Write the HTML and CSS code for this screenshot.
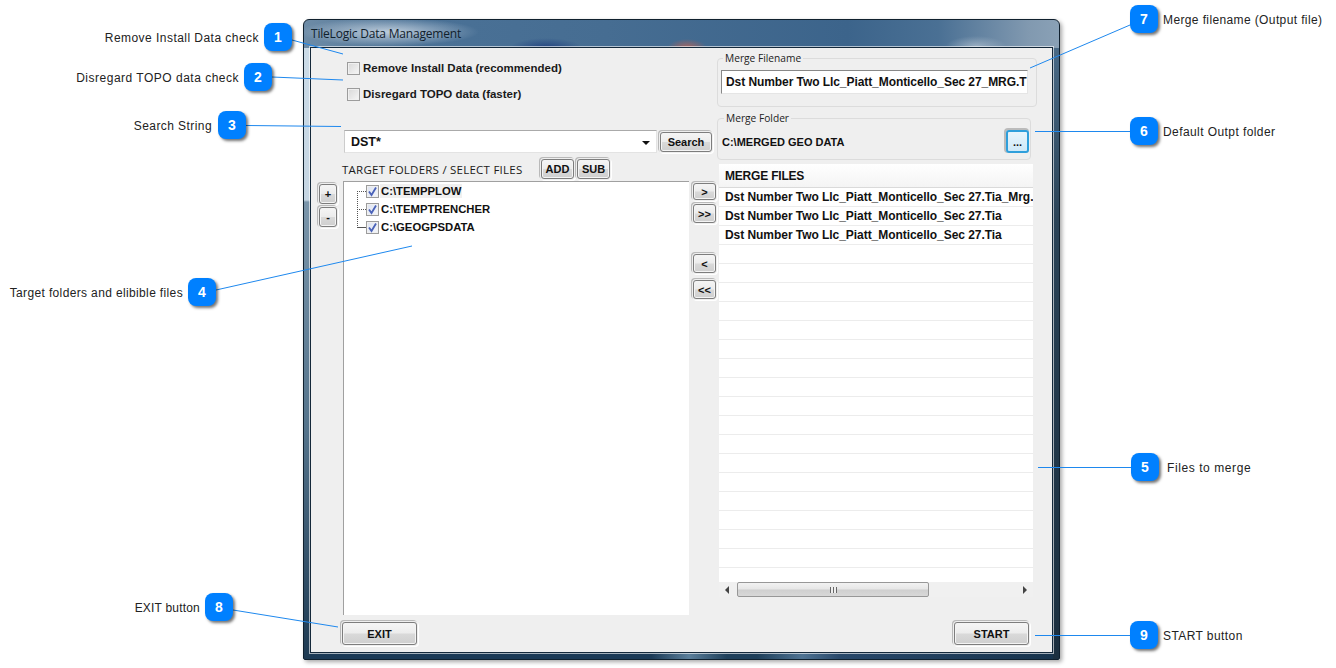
FILE: index.html
```html
<!DOCTYPE html>
<html lang="en">
<head>
<meta charset="utf-8">
<title>TileLogic Data Management</title>
<link rel="stylesheet" href="styles.css">
</head>
<body>
<div class="canvas">
  <section class="window">
    <div class="titlebar">TileLogic Data Management</div>
    <div class="client">
      <div class="col-left">
        <div class="checks">
          <label class="check"><span class="box"></span>Remove Install Data (recommended)</label>
          <label class="check"><span class="box"></span>Disregard TOPO data (faster)</label>
        </div>
        <div class="search-row">
          <div class="combo"><span>DST*</span><i class="caret"></i></div>
          <button class="btn btn-search">Search</button>
        </div>
        <div class="target-row">
          <span class="target-label">TARGET FOLDERS / SELECT FILES</span>
          <button class="btn btn-add">ADD</button>
          <button class="btn btn-add">SUB</button>
        </div>
        <div class="body-row">
          <div class="tools">
            <button class="btn btn-tool">+</button>
            <button class="btn btn-tool">-</button>
          </div>
          <div class="tree">
            <div class="tree-lines"></div>
            <div class="node selected"><span class="box checked"><svg viewBox="0 0 13 13" width="13" height="13"><path d="M3 6.5 L5.5 10 L10 2.5" fill="none" stroke="#4a62b8" stroke-width="1.8"/></svg></span><b>C:\TEMPPLOW</b></div>
            <div class="node"><span class="box checked"><svg viewBox="0 0 13 13" width="13" height="13"><path d="M3 6.5 L5.5 10 L10 2.5" fill="none" stroke="#4a62b8" stroke-width="1.8"/></svg></span><b>C:\TEMPTRENCHER</b></div>
            <div class="node"><span class="box checked"><svg viewBox="0 0 13 13" width="13" height="13"><path d="M3 6.5 L5.5 10 L10 2.5" fill="none" stroke="#4a62b8" stroke-width="1.8"/></svg></span><b>C:\GEOGPSDATA</b></div>
          </div>
          <div class="arrows">
            <button class="btn btn-arrow first">&gt;</button>
            <button class="btn btn-arrow second">&gt;&gt;</button>
            <button class="btn btn-arrow gap-a">&lt;</button>
            <button class="btn btn-arrow gap-b">&lt;&lt;</button>
          </div>
        </div>
        <div class="foot foot-left"><button class="btn btn-wide">EXIT</button></div>
      </div>
      <div class="col-right">
        <fieldset class="group group-file">
          <legend>Merge Filename</legend>
          <div class="file-input">Dst Number Two Llc_Piatt_Monticello_Sec 27_MRG.T</div>
        </fieldset>
        <fieldset class="group group-folder">
          <legend>Merge Folder</legend>
          <span class="folder-path">C:\MERGED GEO DATA</span>
          <button class="btn btn-browse">...</button>
        </fieldset>
        <div class="list">
          <div class="list-head">MERGE FILES</div>
          <div class="list-row">Dst Number Two Llc_Piatt_Monticello_Sec 27.Tia_Mrg.</div>
          <div class="list-row">Dst Number Two Llc_Piatt_Monticello_Sec 27.Tia</div>
          <div class="list-row">Dst Number Two Llc_Piatt_Monticello_Sec 27.Tia</div>
          <div class="list-row"></div><div class="list-row"></div><div class="list-row"></div><div class="list-row"></div>
          <div class="list-row"></div><div class="list-row"></div><div class="list-row"></div><div class="list-row"></div>
          <div class="list-row"></div><div class="list-row"></div><div class="list-row"></div><div class="list-row"></div>
          <div class="list-row"></div><div class="list-row"></div><div class="list-row"></div><div class="list-row"></div>
          <div class="list-row"></div><div class="list-row last"></div>
          <div class="hscroll">
            <i class="arrow-l"></i>
            <div class="thumb"><span class="grip"></span></div>
            <i class="arrow-r"></i>
          </div>
        </div>
        <div class="foot foot-right"><button class="btn btn-wide">START</button></div>
      </div>
    </div>
  </section>

  <svg class="leaders" width="1336" height="668" viewBox="0 0 1336 668">
    <g fill="none" stroke="#1e88ee" stroke-width="1">
      <path d="M292 40 L343 54"/>
      <path d="M272 77 L343 80"/>
      <path d="M246 125.5 L341 126.5"/>
      <path d="M216 290 L412 246"/>
      <path d="M1131 467.5 L1038 467.5"/>
      <path d="M1130 131.5 L1035 131.5"/>
      <path d="M1130 25 L1030 68"/>
      <path d="M233 610 L338 627"/>
      <path d="M1130 635.5 L1035 635.5"/>
    </g>
  </svg>

  <span class="badge b1">1</span><span class="note n1">Remove Install Data check</span>
  <span class="badge b2">2</span><span class="note n2">Disregard TOPO data check</span>
  <span class="badge b3">3</span><span class="note n3">Search String</span>
  <span class="badge b4">4</span><span class="note n4">Target folders and elibible files</span>
  <span class="badge b5">5</span><span class="note n5">Files to merge</span>
  <span class="badge b6">6</span><span class="note n6">Default Outpt folder</span>
  <span class="badge b7">7</span><span class="note n7">Merge filename (Output file)</span>
  <span class="badge b8">8</span><span class="note n8">EXIT button</span>
  <span class="badge b9">9</span><span class="note n9">START button</span>
</div>
</body>
</html>
```
FILE: styles.css
```css
* { box-sizing: border-box; }
html, body { margin: 0; padding: 0; background: #fff; }
body { font-family: "Liberation Sans", Arial, sans-serif; font-size: 12px; color: #111; overflow: hidden; }
.canvas { position: relative; width: 1336px; height: 668px; overflow: hidden; }

/* Window */
.window {
  position: absolute; left: 303px; top: 19px; width: 757px; height: 641px;
  border: 1px solid #10202e; border-radius: 6px 6px 2px 2px;
  box-shadow: 2px 2px 4px rgba(0,0,0,.35);
  padding: 0 6px 6px 6px;
  display: flex; flex-direction: column;
  background:
    linear-gradient(180deg, #cbdbe7 0, #c5d5e2 152px, #7a95aa 154px, #54738b 380px, #1e3a52 100%) left 0 top 28px / 6px calc(100% - 28px) no-repeat,
    linear-gradient(180deg, #4a6a86 0, #2b4458 170px, #22384a 400px, #1c3040 100%) right 0 top 28px / 6px calc(100% - 28px) no-repeat,
    linear-gradient(90deg, #1b3a56 0, #1b3a56 46%, #5b7f9b 51%, #1e3f5a 56%, #1e3f5a 60%, #4f7393 66%, #28486a 71%, #17334c 100%) left 0 bottom 0 / 100% 6px no-repeat,
    radial-gradient(ellipse 90px 14px at 85px 12px, rgba(215,225,235,.8), rgba(215,225,235,0)),
    radial-gradient(ellipse 20px 9px at 383px 28px, rgba(190,100,85,.85), rgba(190,100,85,0)),
    radial-gradient(ellipse 36px 10px at 242px 28px, rgba(20,50,120,.7), rgba(20,50,120,0)),
    radial-gradient(ellipse 30px 10px at 672px 26px, rgba(205,215,225,.5), rgba(205,215,225,0)),
    linear-gradient(90deg, #6d8ba6 0, #4a7196 16%, #466d92 40%, #3c648b 72%, #4a7094 84%, #8199b0 96%, #8aa1b6 100%);
}
.titlebar { height: 27px; line-height: 27px; padding-left: 1px; font-family: "Open Sans", sans-serif; font-size: 12px; letter-spacing: -.2px; color: #10202c; white-space: nowrap; }
.client {
  position: relative; flex: 1; display: flex; background: #efefef;
  border: 1px solid #14283a; outline: 1px solid rgba(255,255,255,.6);
}

/* Shared controls */
button { font: inherit; margin: 0; padding: 0; color: #111; cursor: default; }
.btn {
  display: block; font-weight: bold; font-size: 11px; border: 1px solid #7d7d7d; border-radius: 3px;
  background: linear-gradient(180deg, #f5f5f5 0, #ececec 48%, #d9d9d9 52%, #cfcfcf 100%);
  box-shadow: inset 0 0 0 1px #f4f4f4, 0 0 0 1px #efefef, -1px -1px 0 1px #b9b9b9, 1px 1px 0 1px #fff;
}

/* Left column */
.col-left { width: 406px; flex: none; display: flex; flex-direction: column; }
.checks { display: flex; flex-direction: column; gap: 14px; padding: 14px 0 0 36px; height: 82px; }
.check { display: flex; align-items: center; height: 12px; font-weight: bold; font-size: 11.5px; color: #1a1a1a; white-space: nowrap; }
.box {
  flex: none; width: 13px; height: 13px; margin-right: 3px; display: block;
  border: 1px solid #9c9c9c; background: linear-gradient(135deg, #d8d8d8, #f6f6f6);
  box-shadow: inset 0 0 0 1px #f0f0f0;
}
.box svg { display: block; margin: -1px; }
.box.checked { background: linear-gradient(135deg, #dde3f0, #f4f6fb); }
.search-row { display: flex; align-items: center; gap: 3px; padding-left: 33px; height: 23px; }
.combo {
  width: 313px; height: 23px; background: #fff; border: 1px solid #e3e3e3; border-top-color: #aaa; border-left-color: #ccc;
  display: flex; align-items: center; justify-content: space-between; padding: 0 6px; font-weight: bold; font-size: 12.5px;
}
.caret { width: 0; height: 0; border-left: 4px solid transparent; border-right: 4px solid transparent; border-top: 4px solid #111; margin-top: 2px; }
.btn-search { width: 52px; height: 20px; }
.target-row { display: flex; align-items: center; padding-left: 31px; height: 25px; margin-top: 3px; gap: 3px; }
.target-label { width: 196px; font-family: "Open Sans", sans-serif; font-size: 11.5px; letter-spacing: .24px; color: #1a1a1a; white-space: nowrap; margin-top: 1px; }
.btn-add { width: 33px; height: 20px; }
.body-row { display: flex; height: 434px; }
.tools { width: 32px; padding: 3px 0 0 8px; display: flex; flex-direction: column; gap: 3px; flex: none; }
.btn-tool { width: 18px; height: 20px; }
.tree {
  position: relative; width: 346px; flex: none; background: #fff; border-left: 1px solid #a0a0a0; border-top: 1px solid #a0a0a0;
  padding: 0 0 0 22px;
}
.tree-lines { position: absolute; left: 13px; top: 9px; width: 8px; height: 37px; border-left: 1px dotted #555; border-bottom: 1px dotted #555; }
.node { display: flex; align-items: center; height: 18px; font-size: 11.3px; white-space: nowrap; position: relative; }
.node::before { content: ""; position: absolute; left: -9px; top: 9px; width: 9px; border-top: 1px dotted #555; }
.node.selected b { background: #f0f0f0; }
.node b { padding: 1px 1px; margin-left: -2px; color: #111; }
.arrows { width: 28px; flex: none; display: flex; flex-direction: column; padding: 2px 0 0 4px; gap: 3px; }
.btn-arrow { width: 23px; height: 19px; }
.btn-arrow.first { height: 17px; }
.btn-arrow.second { margin-top: 1px; }
.gap-a { margin-top: 28px; }
.gap-b { margin-top: 4px; }
.foot { margin-top: 7px; }
.foot-left { padding-left: 31px; }
.btn-wide { width: 75px; height: 23px; }

/* Right column */
.col-right { flex: 1; position: relative; }
.group { position: relative; margin: 0; padding: 0; border: 1px solid #dcdcdc; border-radius: 4px; min-width: 0; }
.group legend { font-family: "Open Sans", sans-serif; font-size: 10.2px; padding: 0 2px; margin-left: 5px; color: #222; line-height: 12px; }
.group legend { margin-left: 2px; }
.group-file { width: 320px; height: 55px; margin-top: 4px; padding: 0 0 0 3px; }
.file-input {
  width: 307px; height: 24px; margin-top: 6px; background: #fff; border: 1px solid #888; border-right-color: #e5e5e5; border-bottom-color: #e5e5e5;
  font-weight: bold; font-size: 12px; letter-spacing: -.07px; line-height: 22px; padding-left: 4px; white-space: nowrap;
}
.group-folder { width: 314px; height: 48px; margin-top: 5px; display: flex; flex-wrap: nowrap; padding: 0 0 0 4px; align-items: center; justify-content: space-between; }
.folder-path { font-weight: bold; font-size: 11px; }
.btn-browse { width: 23px; height: 23px; margin-right: 1px; border-color: #2f9fdb; border-width: 2px; background: linear-gradient(180deg, #e8f5fc 0, #cfe9f8 100%); box-shadow: -1px -1px 0 1px #bbb; }
.list { width: 314px; margin: 4px 0 0 2px; background: #fff; overflow: hidden; }
.list-head { height: 24px; line-height: 24px; padding-left: 6px; font-weight: bold; font-size: 12px; letter-spacing: -.2px; background: linear-gradient(180deg, #fff 0, #f4f4f4 100%); border-bottom: 1px solid #dadada; }
.list-row { height: 19px; line-height: 18px; padding-left: 6px; font-weight: bold; font-size: 12px; letter-spacing: -.05px; border-bottom: 1px solid #ececec; white-space: nowrap; }
.list-row.last { border-bottom: 0; height: 14px; }
.hscroll { height: 15px; background: #f0f0f0; display: flex; align-items: center; justify-content: space-between; position: relative; padding: 0 6px; }
.thumb {
  position: absolute; left: 18px; top: 0; width: 192px; height: 15px; border: 1px solid #979797; border-radius: 2px;
  background: linear-gradient(180deg, #f2f2f2 0, #e6e6e6 48%, #cfcfcf 52%, #d8d8d8 100%);
  display: flex; align-items: center; justify-content: center;
}
.grip { width: 7px; height: 6px; background: repeating-linear-gradient(90deg, #666 0 1px, #eee 1px 3px); }
.arrow-l { width: 0; height: 0; border: 4px solid transparent; border-right: 4px solid #444; border-left: 0; }
.arrow-r { width: 0; height: 0; border: 4px solid transparent; border-left: 4px solid #444; border-right: 0; }
.foot-right { display: flex; justify-content: flex-end; padding-right: 23px; margin-top: 25px; }

/* Callouts */
.leaders { position: absolute; left: 0; top: 0; pointer-events: none; }
.badge {
  position: absolute; width: 28px; height: 28px; border-radius: 8px; background: #0080ff; color: #fff;
  font-size: 14px; font-weight: bold; text-align: center; line-height: 28px;
  box-shadow: 2px 2px 3px rgba(0,0,0,.55);
}
.note { position: absolute; font-size: 12px; line-height: 16px; color: #222; white-space: nowrap; letter-spacing: .42px; }
.b1 { left: 264px; top: 23px; } .n1 { right: 1077px; top: 30px; letter-spacing: .46px; }
.b2 { left: 244px; top: 63px; } .n2 { right: 1097px; top: 70px; letter-spacing: .5px; }
.b3 { left: 218px; top: 111px; } .n3 { right: 1124px; top: 118px; }
.b4 { left: 188px; top: 278px; } .n4 { right: 1153px; top: 285px; letter-spacing: .36px; }
.b5 { left: 1131px; top: 453px; } .n5 { left: 1167px; top: 460px; letter-spacing: .58px; }
.b6 { left: 1130px; top: 117px; } .n6 { left: 1163px; top: 124px; }
.b7 { left: 1130px; top: 5px; } .n7 { left: 1163px; top: 12px; letter-spacing: .38px; }
.b8 { left: 205px; top: 593px; } .n8 { right: 1136px; top: 600px; letter-spacing: .2px; }
.b9 { left: 1130px; top: 621px; } .n9 { left: 1163px; top: 628px; }
```
